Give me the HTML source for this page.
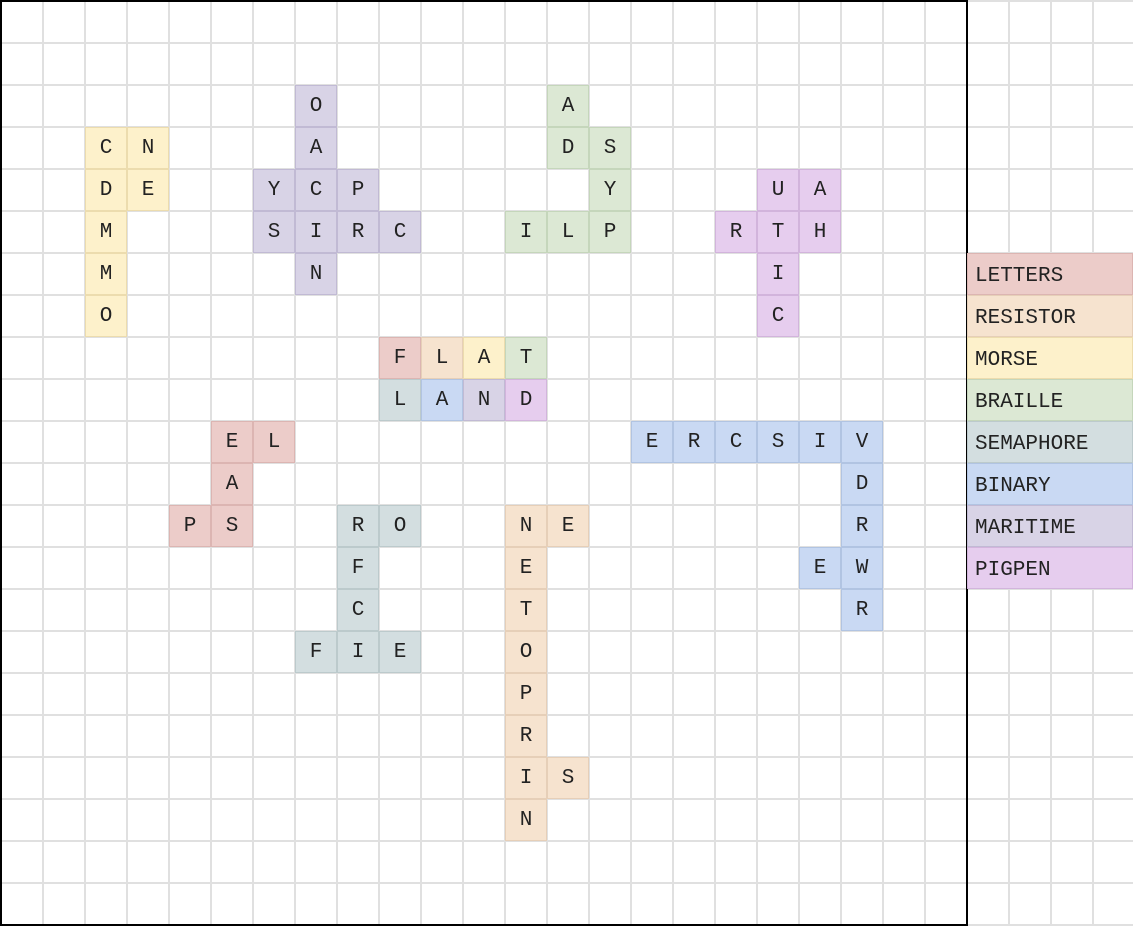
<!DOCTYPE html>
<html><head><meta charset="utf-8"><style>
body{margin:0;width:1133px;height:926px;overflow:hidden;background:#fff;position:relative;}
#g{position:absolute;left:0;top:0;width:1133px;height:926px;
background-image:linear-gradient(to right,#e0e0e0 2px,transparent 2px),linear-gradient(to bottom,#e0e0e0 2px,transparent 2px);
background-size:42px 42px;background-position:0 0;}
#b{position:absolute;left:0;top:0;width:964px;height:922px;border:2px solid #000;}
.c{position:absolute;width:42px;height:42px;box-sizing:border-box;font:21px "Liberation Mono",monospace;
display:flex;align-items:center;justify-content:center;color:#222;padding-top:1px}
.l{position:absolute;left:967px;width:166px;height:42px;box-sizing:border-box;font:21px "Liberation Mono",monospace;
padding-left:7px;padding-top:4px;display:flex;align-items:center;color:#222}
</style></head><body><div id="g"></div><div id="b"></div>
<script>
var C={L:['#ecccc9','#dcb5b2'],R:['#f6e3cf','#e6cfb8'],M:['#fdf1cb','#ecdcae'],B:['#dce8d4','#c5d6bb'],
S:['#d3dee0','#bccacc'],N:['#c9d9f3','#b1c4e2'],T:['#d8d3e6','#c1bad4'],P:['#e6cdee','#d2b4dc']};
var d=[
['M',2,3,'C'],['M',3,3,'N'],['M',2,4,'D'],['M',3,4,'E'],['M',2,5,'M'],['M',2,6,'M'],['M',2,7,'O'],
['T',7,2,'O'],['T',7,3,'A'],['T',6,4,'Y'],['T',7,4,'C'],['T',8,4,'P'],['T',6,5,'S'],['T',7,5,'I'],['T',8,5,'R'],['T',9,5,'C'],['T',7,6,'N'],
['B',13,2,'A'],['B',13,3,'D'],['B',14,3,'S'],['B',14,4,'Y'],['B',12,5,'I'],['B',13,5,'L'],['B',14,5,'P'],
['P',18,4,'U'],['P',19,4,'A'],['P',17,5,'R'],['P',18,5,'T'],['P',19,5,'H'],['P',18,6,'I'],['P',18,7,'C'],
['L',9,8,'F'],['R',10,8,'L'],['M',11,8,'A'],['B',12,8,'T'],
['S',9,9,'L'],['N',10,9,'A'],['T',11,9,'N'],['P',12,9,'D'],
['L',5,10,'E'],['L',6,10,'L'],['N',15,10,'E'],['N',16,10,'R'],['N',17,10,'C'],['N',18,10,'S'],['N',19,10,'I'],['N',20,10,'V'],
['L',5,11,'A'],['N',20,11,'D'],
['L',4,12,'P'],['L',5,12,'S'],['S',8,12,'R'],['S',9,12,'O'],['R',12,12,'N'],['R',13,12,'E'],['N',20,12,'R'],
['S',8,13,'F'],['R',12,13,'E'],['N',19,13,'E'],['N',20,13,'W'],
['S',8,14,'C'],['R',12,14,'T'],['N',20,14,'R'],
['S',7,15,'F'],['S',8,15,'I'],['S',9,15,'E'],['R',12,15,'O'],
['R',12,16,'P'],['R',12,17,'R'],['R',12,18,'I'],['R',13,18,'S'],['R',12,19,'N']];
var h='';
d.forEach(function(e){var k=C[e[0]];h+='<div class="c" style="left:'+(e[1]*42+1)+'px;top:'+(e[2]*42+1)+'px;background:'+k[0]+';border:1px solid '+k[1]+'">'+e[3]+'</div>';});
var lg=[['L','LETTERS'],['R','RESISTOR'],['M','MORSE'],['B','BRAILLE'],['S','SEMAPHORE'],['N','BINARY'],['T','MARITIME'],['P','PIGPEN']];
lg.forEach(function(e,i){var k=C[e[0]];h+='<div class="l" style="top:'+(253+i*42)+'px;background:'+k[0]+';border:1px solid '+k[1]+'">'+e[1]+'</div>';});
document.body.insertAdjacentHTML('beforeend',h);
</script></body></html>
